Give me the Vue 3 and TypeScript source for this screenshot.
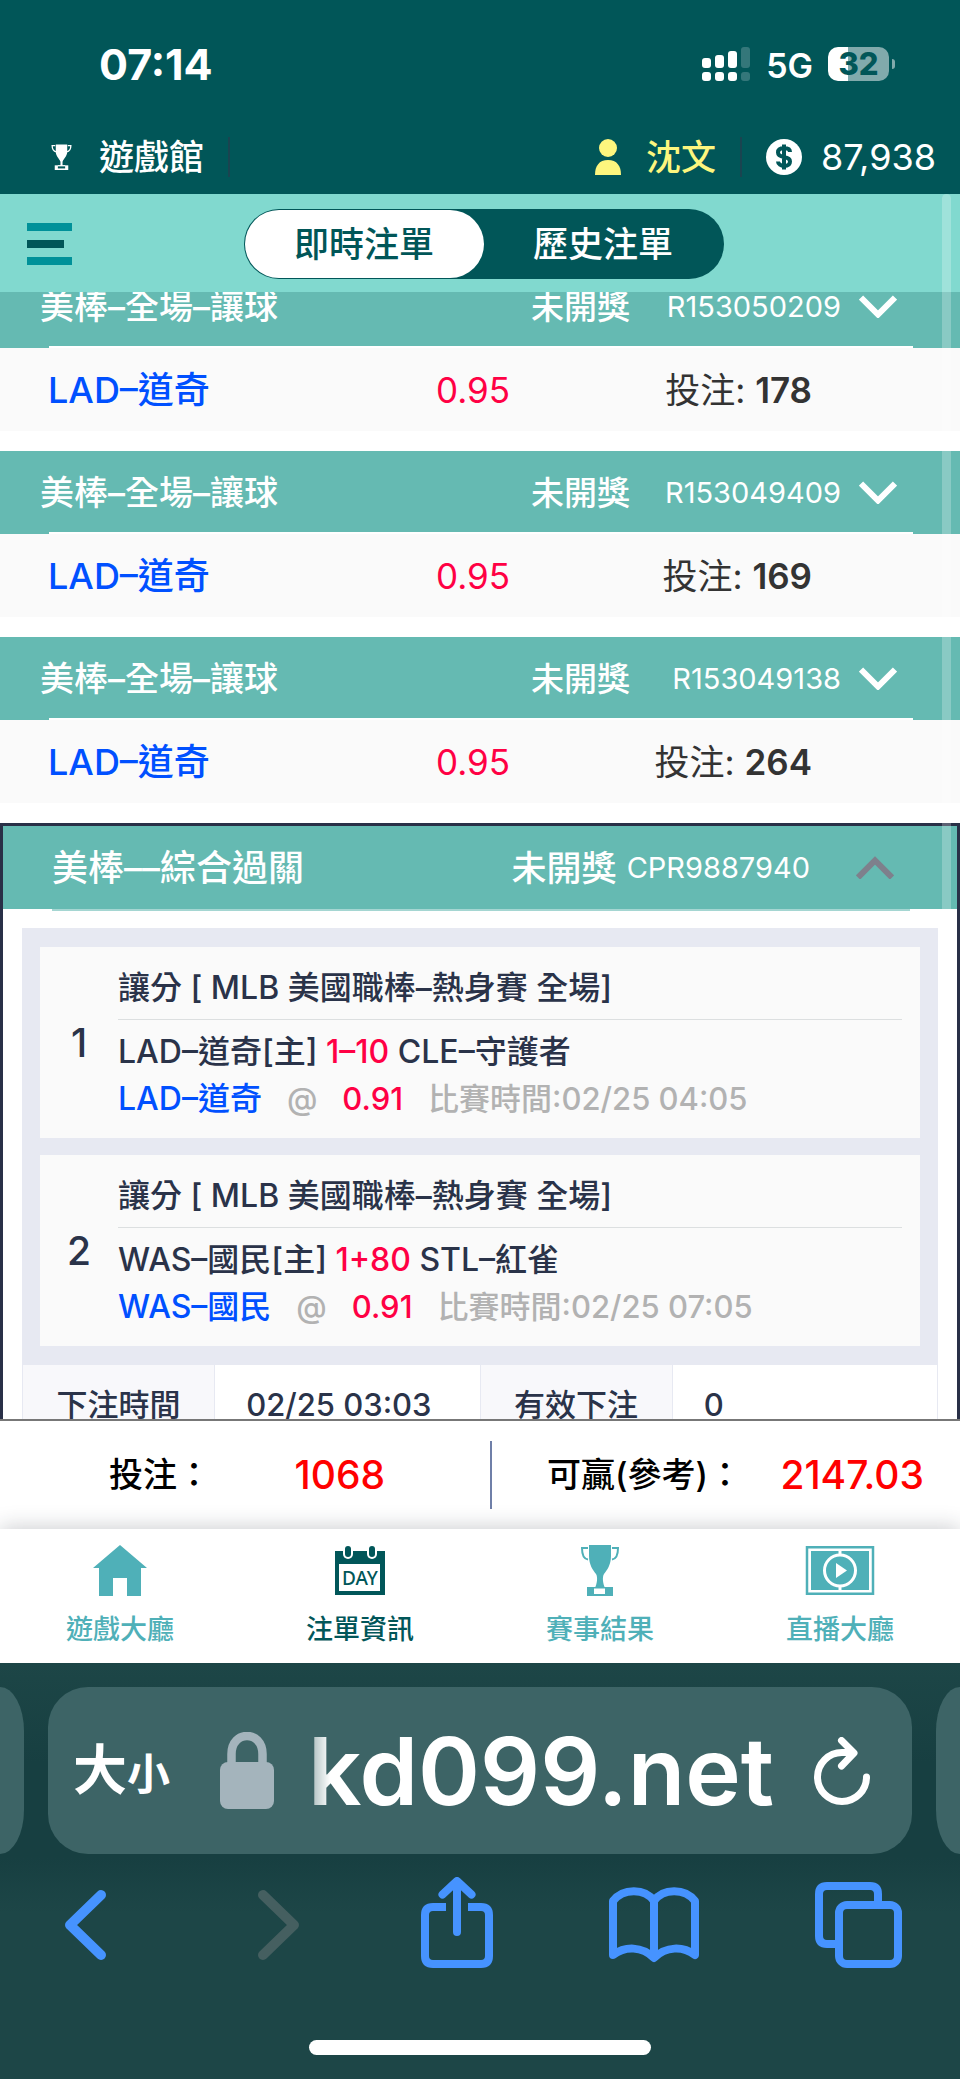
<script setup lang="ts">
import { ref } from 'vue'

interface Bet { id: number; title: string; status: string; no: string; team: string; odds: string; stake: number }
interface Leg { home: string; line: string; away: string; pick: string; odds: string; time: string }

const tabs: string[] = ['即時注單', '歷史注單']
const current = ref(0)

const bets: Bet[] = [
  { id: 1, title: '美棒–全場–讓球', status: '未開獎', no: 'R153050209', team: 'LAD–道奇', odds: '0.95', stake: 178 },
  { id: 2, title: '美棒–全場–讓球', status: '未開獎', no: 'R153049409', team: 'LAD–道奇', odds: '0.95', stake: 169 },
  { id: 3, title: '美棒–全場–讓球', status: '未開獎', no: 'R153049138', team: 'LAD–道奇', odds: '0.95', stake: 264 },
]

const legs: Leg[] = [
  { home: 'LAD–道奇[主]', line: '1–10', away: 'CLE–守護者', pick: 'LAD–道奇', odds: '0.91', time: '02/25 04:05' },
  { home: 'WAS–國民[主]', line: '1+80', away: 'STL–紅雀', pick: 'WAS–國民', odds: '0.91', time: '02/25 07:05' },
]

const address = ref('kd099.net')
</script>

<template>
  <div class="screen">
    <header class="top">
      <div class="status">
        <span class="clock">07:14</span>
        <div class="signals">
          <svg class="cell" viewBox="0 0 48 34" aria-hidden="true">
            <g fill="#fff">
              <rect x="0" y="11" width="9" height="10" rx="3" /><rect x="0" y="25" width="9" height="9" rx="3" />
              <rect x="13" y="8" width="9" height="13" rx="3" /><rect x="13" y="25" width="9" height="9" rx="3" />
              <rect x="26" y="4" width="9" height="17" rx="3" /><rect x="26" y="25" width="9" height="9" rx="3" />
            </g>
            <g fill="#34777a">
              <rect x="39" y="0" width="9" height="21" rx="3" /><rect x="39" y="25" width="9" height="9" rx="3" />
            </g>
          </svg>
          <span class="net">5G</span>
          <span class="battery"><span class="level">32</span></span>
        </div>
      </div>
      <nav class="account">
        <a class="hall" href="#hall">
          <svg class="cup-small" viewBox="0 0 40 50" aria-hidden="true">
            <path fill="currentColor" d="M9 1h22v14c0 8-6 12-9 19v7h5v8H13v-8h5v-7c-3-7-9-11-9-19z" />
            <path fill="none" stroke="currentColor" stroke-width="2.5" d="M8 3H2c0 7 2 11 8 12M32 3h6c0 7-2 11-8 12" />
            <path fill="currentColor" d="M7 41h26v9H7z" /><path fill="#015658" d="M13 43h14v4H13z" />
          </svg>
          <span>遊戲館</span>
        </a>
        <i class="rule"></i>
        <a class="user" href="#user">
          <svg class="person" viewBox="0 0 26 36" aria-hidden="true">
            <circle cx="13" cy="9" r="9" fill="currentColor" />
            <path fill="currentColor" d="M0 36C0 27 4 21 13 21s13 6 13 15z" />
          </svg>
          <span>沈文</span>
        </a>
        <i class="rule"></i>
        <span class="balance">
          <svg class="coin" viewBox="0 0 36 36" aria-hidden="true">
            <circle cx="18" cy="18" r="18" fill="#fff" />
            <path fill="none" stroke="#015658" stroke-width="4" d="M24 13c0-3-3-4-6-4s-6 1-6 4.500 3 4 6 4.500 6 1 6 4.500-3 4.500-6 4.500-6-2-6-4.500M18 5.500v25" />
          </svg>
          <span>87,938</span>
        </span>
      </nav>
    </header>

    <main class="content">
      <div class="filter">
        <button class="menu" type="button" aria-label="選單"><i></i><i></i><i></i></button>
        <div class="toggle" role="tablist">
          <button
            v-for="(tab, i) in tabs" :key="tab" type="button" role="tab"
            :aria-selected="i === current" :class="{ on: i === current }" @click="current = i"
          >{{ tab }}</button>
        </div>
      </div>

      <div class="scroller">
        <div class="records">
          <article v-for="bet in bets" :key="bet.id" class="record">
            <button class="head" type="button">
              <span class="title">{{ bet.title }}</span>
              <span>{{ bet.status }}</span>
              <span class="no">{{ bet.no }}</span>
              <svg class="chevron" viewBox="0 0 38 23" aria-hidden="true">
                <path d="M2 2.500l17 17 17-17" fill="none" stroke="#fff" stroke-width="6" />
              </svg>
            </button>
            <div class="line">
              <span class="team">{{ bet.team }}</span>
              <span class="odds">{{ bet.odds }}</span>
              <span class="stake">投注: <b>{{ bet.stake }}</b></span>
            </div>
          </article>

          <article class="parlay">
            <button class="head" type="button">
              <span class="title">美棒––綜合過關</span>
              <span>未開獎</span>
              <span class="no">CPR9887940</span>
              <svg class="chevron" viewBox="0 0 38 23" aria-hidden="true">
                <path d="M2 21.500l17-17 17 17" fill="none" stroke="#7e808c" stroke-width="6" />
              </svg>
            </button>
            <div class="detail">
              <ol class="legs">
                <li v-for="(leg, i) in legs" :key="leg.pick">
                  <span class="index">{{ i + 1 }}</span>
                  <div class="info">
                    <p class="league">讓分 [ MLB 美國職棒–熱身賽 全場]</p>
                    <p>{{ leg.home }} <em>{{ leg.line }}</em> {{ leg.away }}</p>
                    <p class="pick">
                      <span class="team">{{ leg.pick }}</span><span class="at">@</span><em>{{ leg.odds }}</em>
                      <span class="at">比賽時間:{{ leg.time }}</span>
                    </p>
                  </div>
                </li>
              </ol>
              <table>
                <tbody>
                  <tr>
                    <th scope="row">下注時間</th><td class="when">02/25 03:03</td>
                    <th scope="row">有效下注</th><td>0</td>
                  </tr>
                </tbody>
              </table>
            </div>
          </article>
        </div>
      </div>
      <i class="thumb"></i>
    </main>

    <section class="summary">
      <div class="total"><span>投注：</span><strong>1068</strong></div>
      <i class="split"></i>
      <div class="total win"><span>可贏(參考)：</span><strong>2147.03</strong></div>
    </section>

    <nav class="tabs">
      <a href="#lobby">
        <svg viewBox="0 0 72 52" aria-hidden="true">
          <path fill="currentColor" d="M36 0l27 23h-6v28H43V33H29v18H15V23H9z" />
        </svg>
        <span>遊戲大廳</span>
      </a>
      <a href="#bets" class="active">
        <svg viewBox="0 0 72 52" aria-hidden="true">
          <path fill="currentColor" d="M11 6h50v44H11z" />
          <path fill="#fff" d="M15 19h41v27H15z" />
          <rect x="19" y="-1" width="10" height="15" rx="5" fill="#fff" /><rect x="43" y="-1" width="10" height="15" rx="5" fill="#fff" />
          <rect x="21" y="1" width="6" height="11" rx="3" fill="currentColor" /><rect x="45" y="1" width="6" height="11" rx="3" fill="currentColor" />
          <text x="36" y="40" text-anchor="middle" class="day">DAY</text>
        </svg>
        <span>注單資訊</span>
      </a>
      <a href="#results">
        <svg viewBox="0 0 72 52" aria-hidden="true">
          <path fill="currentColor" d="M25 0h22v11c0 9-4 14-7 18-2 3-1 10 1 14H31c2-4 3-11 1-14-3-4-7-9-7-18z" />
          <path fill="none" stroke="currentColor" stroke-width="2" d="M24 3h-6c0 7 2 11 6 11.500M48 3h6c0 7-2 11-6 11.500" />
          <path fill="currentColor" d="M23 42h26v9H23z" /><path fill="#fff" d="M30 43.500h11v5.500H30z" />
        </svg>
        <span>賽事結果</span>
      </a>
      <a href="#live">
        <svg viewBox="0 0 72 52" aria-hidden="true">
          <path fill="none" stroke="currentColor" stroke-width="2.500" d="M3 2.300h66v46.400H3z" />
          <path fill="currentColor" d="M7 6h58v39H7z" />
          <path stroke="#fff" stroke-width="3" d="M36 5v41" />
          <circle cx="36" cy="25.500" r="15.500" fill="currentColor" stroke="#fff" stroke-width="3" />
          <path fill="#fff" d="M32 18l11 7.500-11 7.500z" />
        </svg>
        <span>直播大廳</span>
      </a>
    </nav>

    <footer class="browser">
      <div class="address-row">
        <i class="peek left"></i>
        <div class="address">
          <button class="text-size" type="button" aria-label="大小"><b>大</b><small>小</small></button>
          <svg class="lock" viewBox="0 0 54 77" aria-hidden="true">
            <rect x="0" y="30" width="54" height="47" rx="8" fill="#a4b4bc" />
            <path d="M11.500 34V22c0-24 31-24 31 0v12" fill="none" stroke="#a4b4bc" stroke-width="8.500" />
          </svg>
          <input v-model="address" type="text" aria-label="網址" spellcheck="false">
          <button class="reload" type="button" aria-label="重新載入">
            <svg viewBox="0 0 56 68" aria-hidden="true">
              <path d="M52.500 40A24.500 24.500 0 1 1 28 15.500H39M27.500 3.500L40 16 27.500 29" fill="none" stroke="#fff" stroke-width="7" stroke-linecap="round" stroke-linejoin="round" />
            </svg>
          </button>
        </div>
        <i class="peek right"></i>
      </div>

      <div class="tools">
        <button type="button" aria-label="上一頁">
          <svg class="w41" viewBox="0 0 41 70"><path d="M36 5L5 35l31 30" /></svg>
        </button>
        <button type="button" aria-label="下一頁" disabled>
          <svg class="w41" viewBox="0 0 41 70"><path d="M5 5l31 30L5 65" /></svg>
        </button>
        <button type="button" aria-label="分享">
          <svg class="w72 thin" viewBox="0 0 72 97">
            <path class="butt" d="M25 30H12q-8 0-8 8V79q0 8 8 8h48q8 0 8-8V38q0-8-8-8H47" />
            <path d="M36 55V5M21.500 17.500L36 4 50.500 17.500" />
          </svg>
        </button>
        <button type="button" aria-label="書籤">
          <svg class="w90 thin" viewBox="0 0 90 76">
            <path d="M45 14C36 1 14 1 4 14v54c12-9 29-9 41 3 12-12 29-12 41-3V14C76 1 54 1 45 14zM45 14v56" />
          </svg>
        </button>
        <button type="button" aria-label="分頁">
          <svg class="w87 thin" viewBox="0 0 87 86">
            <path class="butt" d="M63 20V12q0-8-8-8H12q-8 0-8 8v42q0 8 8 8h10" />
            <rect x="24" y="23" width="59" height="59" rx="8" />
          </svg>
        </button>
      </div>
      <i class="home"></i>
    </footer>
  </div>
</template>

<style>
body {
  margin: 0;
}
</style>

<style scoped>
.screen {
  display: flex;
  flex-direction: column;
  height: 100vh;
  overflow: hidden;
  background: #fff;
  font-family: Inter, "Noto Sans CJK TC", sans-serif;
  font-size: 35px;
  font-weight: 500;
  line-height: 48px;
}
* {
  box-sizing: border-box;
}
button, input {
  margin: 0;
  padding: 0;
  border: 0;
  background: none;
  color: inherit;
  font: inherit;
}
a {
  color: inherit;
  text-decoration: none;
}
p {
  margin: 0;
}
svg {
  display: block;
  flex: none;
}
em {
  color: #ff0044;
  font-style: normal;
}

/* status and account */
.top {
  flex: none;
  background: #015658;
  color: #fff;
}
.status {
  display: flex;
  align-items: center;
  justify-content: space-between;
  height: 120px;
  padding: 8px 71px 0 99px;
}
.clock {
  font-size: 43px;
  font-weight: 700;
}
.signals {
  display: flex;
  align-items: center;
}
.cell {
  width: 48px;
  height: 34px;
}
.net {
  margin: 3px 15px 0 16px;
  font-size: 34px;
  font-weight: 600;
}
.battery {
  position: relative;
  width: 61px;
  height: 34px;
  border-radius: 10px;
  background: linear-gradient(90deg, #fff 20px, #81aaac 20px);
  color: #015658;
}
.battery::after {
  content: "";
  position: absolute;
  top: 12px;
  right: -6px;
  width: 3px;
  height: 10px;
  border-radius: 0 4px 4px 0;
  background: #81aaac;
}
.level {
  display: block;
  font-size: 31px;
  font-weight: 800;
  line-height: 34px;
  text-align: center;
}
.account {
  display: flex;
  align-items: center;
  height: 74px;
  padding: 0 24px 0 51px;
}
.hall, .user, .balance {
  display: flex;
  align-items: center;
}
.hall {
  gap: 27px;
}
.user {
  gap: 25px;
  margin-left: auto;
  color: #fdf67e;
}
.balance {
  gap: 19px;
  font-size: 36px;
  font-weight: 400;
}
.rule {
  width: 2px;
  height: 40px;
  margin: 0 24px;
  background: #1a4450;
}
.cup-small {
  width: 21px;
  height: 26px;
}
.person {
  width: 26px;
  height: 36px;
}
.coin {
  width: 36px;
  height: 36px;
}

/* content */
.content {
  position: relative;
  display: flex;
  flex: 1;
  flex-direction: column;
  min-height: 0;
}
.filter {
  display: grid;
  flex: none;
  grid-template-columns: 1fr 480px 1fr;
  align-items: center;
  height: 98px;
  padding: 2px 20px 0 27px;
  background: #81d9cf;
}
.menu {
  display: grid;
  gap: 9px;
  width: 45px;
}
.menu i {
  height: 8px;
  background: #009199;
}
.menu i:nth-child(2) {
  width: 37px;
  background: #015658;
}
.toggle {
  display: flex;
  height: 70px;
  padding: 1px;
  border-radius: 35px;
  background: #015658;
  color: #fff;
}
.toggle button {
  flex: 1;
  border-radius: 34px;
}
.toggle .on {
  background: #fff;
  color: #015658;
}
.scroller {
  flex: 1;
  min-height: 0;
  overflow: hidden;
}
.records {
  display: grid;
  gap: 20px;
  margin-top: -27px;
}
.head {
  position: relative;
  display: flex;
  align-items: center;
  width: 100%;
  height: 83px;
  padding: 0 63px 0 40px;
  background: #65bab2;
  color: #fff;
  font-size: 33px;
  text-align: left;
}
.head::after {
  content: "";
  position: absolute;
  right: 47px;
  bottom: 0;
  left: 49px;
  height: 2px;
  background: #fff;
}
.title {
  flex: 1;
  font-size: 34px;
}
.no {
  min-width: 211px;
  font-size: 29px;
  font-weight: 400;
  text-align: right;
}
.chevron {
  width: 38px;
  height: 23px;
  margin-left: 18px;
}
.line {
  display: grid;
  grid-template-columns: 388px 1fr auto;
  align-items: center;
  height: 83px;
  padding: 0 148px 0 48px;
  background: #fafafa;
}
.team {
  color: #0050ff;
}
.line .team {
  font-size: 36px;
}
.odds {
  color: #ff0044;
  font-weight: 400;
}
.stake {
  color: #333;
  font-weight: 400;
}
.stake b {
  font-weight: 600;
}
.thumb {
  position: absolute;
  top: 0;
  right: 9px;
  bottom: 0;
  width: 9px;
  border-radius: 5px;
  background: rgba(255, 255, 255, 0.24);
}

/* parlay */
.parlay {
  border: 3px solid #293047;
  background: #fff;
}
.parlay .head {
  padding: 0 63px 0 49px;
  font-size: 35px;
}
.parlay .head::after {
  bottom: -2px;
  background: #a5d6d2;
}
.parlay .title {
  font-size: 36px;
}
.parlay .no {
  min-width: 0;
  margin-left: 10px;
}
.parlay .chevron {
  margin-left: 46px;
}
.detail {
  padding: 19px 19px 0;
  color: #2a3349;
  font-size: 31px;
}
.legs {
  display: grid;
  gap: 17px;
  margin: 0;
  padding: 19px 18px 18px;
  background: #e7e9f2;
  font-size: 32px;
  list-style: none;
}
.legs li {
  display: flex;
  align-items: center;
  padding-right: 18px;
  background: #fafafa;
}
.index {
  width: 78px;
  font-size: 39px;
  text-align: center;
}
.info {
  flex: 1;
  padding: 17px 0 16px;
  line-height: 47px;
}
.league {
  margin-bottom: 8px;
  padding-bottom: 8px;
  border-bottom: 1px solid #dcdfe0;
}
.pick {
  display: flex;
  gap: 25px;
}
.pick em, .at {
  font-size: 31px;
}
.at {
  color: #b2b2b2;
}
table {
  width: 100%;
  border-collapse: collapse;
  table-layout: fixed;
}
th, td {
  height: 80px;
  padding: 0;
  border: 1px solid #e7e9f2;
  font-weight: 500;
}
th {
  width: 21%;
  background: #f8f8fb;
}
td {
  padding-left: 31px;
}

/* totals */
.summary {
  display: grid;
  flex: none;
  grid-template-columns: 490fr 2px 468fr;
  align-items: center;
  height: 110px;
  border-top: 2px solid #777;
  background: #fff;
  color: #000;
  font-size: 34px;
}
.summary strong {
  color: #ff0000;
  font-size: 39px;
  font-weight: 500;
}
.total {
  display: flex;
  align-items: center;
  justify-content: space-between;
  padding: 0 105px 0 109px;
  white-space: nowrap;
}
.win {
  padding: 0 36px 0 55px;
}
.split {
  height: 68px;
  background: #6f7fa8;
}

/* bottom tabs */
.tabs {
  position: relative;
  display: flex;
  flex: none;
  height: 134px;
  background: #fff;
  box-shadow: 0 -2px 20px rgba(30, 35, 50, 0.22);
  color: #4fb0b8;
  font-size: 27px;
  line-height: 36px;
}
.tabs a {
  display: flex;
  flex: 1;
  flex-direction: column;
  align-items: center;
  gap: 15px;
  padding-top: 16px;
}
.tabs .active {
  color: #015659;
}
.tabs svg {
  width: 72px;
  height: 52px;
}
.day {
  fill: currentColor;
  font-family: "Noto Sans", sans-serif;
  font-size: 19px;
}

/* browser chrome */
.browser {
  position: relative;
  display: flex;
  flex: none;
  flex-direction: column;
  align-items: center;
  height: 416px;
  padding-top: 24px;
  background: linear-gradient(#1d4647, #173f41 100px, #173f41 195px, #1d4647 250px);
  color: #fff;
}
.address-row {
  display: flex;
  gap: 24px;
  width: 100%;
  height: 167px;
}
.peek {
  width: 24px;
  background: #3d6466;
}
.left {
  border-radius: 0 24px 24px 0 / 0 44px 44px 0;
}
.right {
  border-radius: 24px 0 0 24px / 44px 0 0 44px;
}
.address {
  display: flex;
  flex: 1;
  align-items: center;
  min-width: 0;
  padding: 0 42px 0 25px;
  border-radius: 40px;
  background: #3d6466;
}
.text-size {
  display: flex;
  align-items: baseline;
  width: 105px;
}
.text-size b {
  font-size: 54px;
  line-height: 64px;
}
.text-size small {
  font-size: 43px;
  font-weight: 700;
}
.lock {
  width: 54px;
  height: 77px;
  margin: 0 34px 0 42px;
}
.address input {
  flex: 1;
  min-width: 0;
  height: 120px;
  font-size: 94px;
  font-weight: 600;
  outline: 0;
  mask-image: linear-gradient(90deg, rgba(0, 0, 0, 0.5), #000 22px);
}
.reload svg {
  width: 56px;
  height: 68px;
}
.tools {
  display: grid;
  grid-template-columns: 193fr 163fr 188fr 206fr 145fr;
  align-items: center;
  width: 100%;
  height: 142px;
  padding-left: 65px;
}
.tools button {
  justify-self: start;
}
.tools svg {
  fill: none;
  stroke: #4693ff;
  stroke-width: 10;
  stroke-linecap: round;
  stroke-linejoin: round;
}
.tools .thin {
  stroke-width: 8;
}
.tools .butt {
  stroke-linecap: butt;
}
.tools :disabled svg {
  stroke: #455f60;
}
.w41 {
  width: 41px;
}
.w72 {
  width: 72px;
}
.w90 {
  width: 90px;
}
.w87 {
  width: 87px;
}
.home {
  width: 342px;
  height: 15px;
  margin-top: 44px;
  border-radius: 8px;
  background: #fff;
}
</style>
